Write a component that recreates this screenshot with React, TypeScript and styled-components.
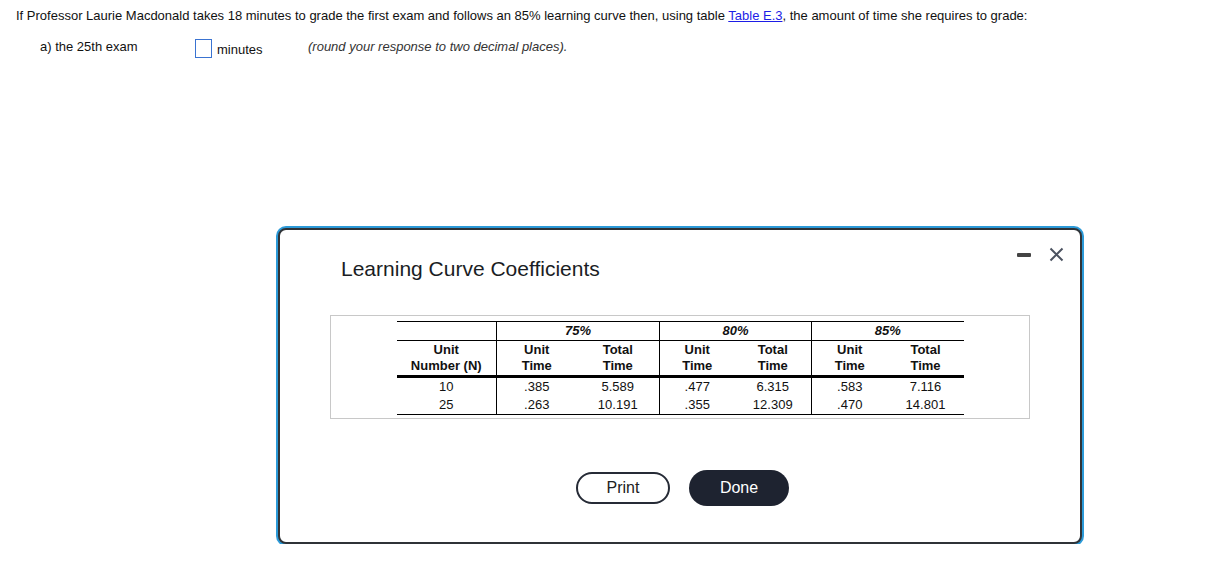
import React from 'react';
import styled, { createGlobalStyle } from 'styled-components';

const GlobalStyle = createGlobalStyle`
  body {
    margin: 0;
    background: #fff;
    font-family: 'Liberation Sans', Arial, sans-serif;
    color: #111;
  }
`;

const rows = [
  { n: '10', u75: '.385', t75: '5.589', u80: '.477', t80: '6.315', u85: '.583', t85: '7.116' },
  { n: '25', u75: '.263', t75: '10.191', u80: '.355', t80: '12.309', u85: '.470', t85: '14.801' },
];

const Page = styled.div`
  padding: 9px 0 0 16px;
  font-size: 13px;
`;

const Question = styled.p`
  margin: 0;
  line-height: 14px;
  white-space: nowrap;
  a {
    color: #1d1de6;
    text-decoration: underline;
  }
`;

const AnswerRow = styled.div`
  display: flex;
  align-items: center;
  margin: 16px 0 0 24px;
  height: 19px;
`;

const PartLabel = styled.span`
  width: 155px;
  margin-top: -4px;
`;

const AnswerBox = styled.span`
  width: 15px;
  height: 17px;
  border: 1px solid #3a73d1;
  margin-right: 5px;
`;

const Unit = styled.span`
  width: 91px;
  margin-top: 2px;
`;

const Hint = styled.span`
  font-style: italic;
  color: #333;
  margin-top: -4px;
`;

const Dialog = styled.div`
  margin: 170px 0 0 262px;
  width: 800px;
  border: 2px solid #2f3337;
  border-radius: 8px;
  box-shadow: 0 0 0 2px #2c9ad8;
  background: #fff;
  padding-bottom: 36px;
`;

const Header = styled.div`
  display: flex;
  justify-content: space-between;
  align-items: flex-start;
  padding: 17px 16px 0 61px;
`;

const Title = styled.h2`
  margin: 10px 0 0;
  font-size: 21px;
  line-height: 24px;
  font-weight: normal;
  color: #1a1d24;
`;

const Controls = styled.div`
  display: flex;
  align-items: center;
  gap: 18px;
  height: 15px;
`;

const Minimize = styled.span`
  width: 14px;
  height: 4px;
  border-radius: 1px;
  background: #444;
  margin-top: 1px;
`;

const TableBox = styled.div`
  margin: 34px 50px 0;
  height: 104px;
  box-sizing: border-box;
  border: 1px solid #c8c8c8;
  display: flex;
  justify-content: center;
  padding-top: 5px;
`;

const Table = styled.table`
  border-collapse: collapse;
  font-size: 13px;
  line-height: 16px;
  color: #111;
  height: 93px;
  border-top: 1px solid #000;
  border-bottom: 1px solid #000;
`;

const Col = styled.col<{ $w: number }>`
  width: ${(p) => p.$w}px;
`;

const Th = styled.th<{ $line?: boolean; $italic?: boolean }>`
  padding: 1px 0;
  text-align: center;
  font-weight: bold;
  font-style: ${(p) => (p.$italic ? 'italic' : 'normal')};
  border-right: ${(p) => (p.$line ? '1px solid #000' : 'none')};
  border-bottom: 1px solid #000;
`;

const SubTh = styled(Th)`
  border-bottom: 3px solid #000;
`;

const Td = styled.td<{ $line?: boolean }>`
  padding: 1px 0;
  text-align: center;
  border-right: ${(p) => (p.$line ? '1px solid #000' : 'none')};
`;

const Buttons = styled.div`
  display: flex;
  justify-content: center;
  align-items: center;
  gap: 19px;
  margin-top: 51px;
  padding-left: 5px;
`;

const Button = styled.button<{ $primary?: boolean }>`
  box-sizing: border-box;
  width: ${(p) => (p.$primary ? 100 : 94)}px;
  height: ${(p) => (p.$primary ? 36 : 32)}px;
  border-radius: 18px;
  border: ${(p) => (p.$primary ? 'none' : '2px solid #262b36')};
  background: ${(p) => (p.$primary ? '#1e2330' : '#fff')};
  color: ${(p) => (p.$primary ? '#fff' : '#222')};
  font-family: 'Liberation Sans', Arial, sans-serif;
  font-size: 16px;
  cursor: pointer;
`;

const CloseIcon = () => (
  <svg width="15" height="15" viewBox="0 0 15 15">
    <path d="M1.5 1.5 L13.5 13.5 M13.5 1.5 L1.5 13.5" stroke="#4b5260" strokeWidth="2" fill="none" />
  </svg>
);

export default function App() {
  return (
    <>
      <GlobalStyle />
      <Page>
        <Question>
          If Professor Laurie Macdonald takes 18 minutes to grade the first exam and follows an 85% learning curve then, using
          table <a href="#">Table E.3</a>, the amount of time she requires to grade:
        </Question>
        <AnswerRow>
          <PartLabel>a) the 25th exam</PartLabel>
          <AnswerBox />
          <Unit>minutes</Unit>
          <Hint>(round your response to two decimal places).</Hint>
        </AnswerRow>
        <Dialog>
          <Header>
            <Title>Learning Curve Coefficients</Title>
            <Controls>
              <Minimize />
              <CloseIcon />
            </Controls>
          </Header>
          <TableBox>
            <Table>
              <colgroup>
                <Col $w={100} />
                <Col $w={80} />
                <Col $w={83} />
                <Col $w={75} />
                <Col $w={77} />
                <Col $w={76} />
                <Col $w={76} />
              </colgroup>
              <thead>
                <tr>
                  <Th $line />
                  <Th colSpan={2} $italic $line>75%</Th>
                  <Th colSpan={2} $italic $line>80%</Th>
                  <Th colSpan={2} $italic>85%</Th>
                </tr>
                <tr>
                  <SubTh $line>Unit<br />Number (N)</SubTh>
                  <SubTh>Unit<br />Time</SubTh>
                  <SubTh $line>Total<br />Time</SubTh>
                  <SubTh>Unit<br />Time</SubTh>
                  <SubTh $line>Total<br />Time</SubTh>
                  <SubTh>Unit<br />Time</SubTh>
                  <SubTh>Total<br />Time</SubTh>
                </tr>
              </thead>
              <tbody>
                {rows.map((r) => (
                  <tr key={r.n}>
                    <Td $line>{r.n}</Td>
                    <Td>{r.u75}</Td>
                    <Td $line>{r.t75}</Td>
                    <Td>{r.u80}</Td>
                    <Td $line>{r.t80}</Td>
                    <Td>{r.u85}</Td>
                    <Td>{r.t85}</Td>
                  </tr>
                ))}
              </tbody>
            </Table>
          </TableBox>
          <Buttons>
            <Button>Print</Button>
            <Button $primary>Done</Button>
          </Buttons>
        </Dialog>
      </Page>
    </>
  );
}
